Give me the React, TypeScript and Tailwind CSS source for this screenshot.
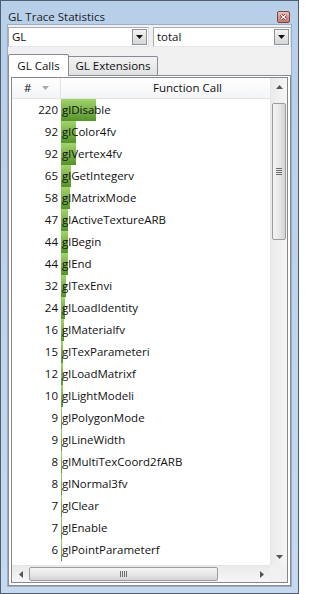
import React from 'react';

const calls: [number, string][] = [
  [220, 'glDisable'],
  [92, 'glColor4fv'],
  [92, 'glVertex4fv'],
  [65, 'glGetIntegerv'],
  [58, 'glMatrixMode'],
  [47, 'glActiveTextureARB'],
  [44, 'glBegin'],
  [44, 'glEnd'],
  [32, 'glTexEnvi'],
  [24, 'glLoadIdentity'],
  [16, 'glMaterialfv'],
  [15, 'glTexParameteri'],
  [12, 'glLoadMatrixf'],
  [10, 'glLightModeli'],
  [9, 'glPolygonMode'],
  [9, 'glLineWidth'],
  [8, 'glMultiTexCoord2fARB'],
  [8, 'glNormal3fv'],
  [7, 'glClear'],
  [7, 'glEnable'],
  [6, 'glPointParameterf'],
];

const Arrow = ({ dir, color = '#404040' }: { dir: 'up' | 'down' | 'left' | 'right'; color?: string }) => {
  const pts = {
    up: '0,4 3.5,0 7,4',
    down: '0,0 7,0 3.5,4',
    left: '4,0 4,7 0,3.5',
    right: '0,0 0,7 4,3.5',
  }[dir];
  const vertical = dir === 'up' || dir === 'down';
  return (
    <svg width={vertical ? 7 : 4} height={vertical ? 4 : 7} viewBox={vertical ? '0 0 7 4' : '0 0 4 7'}>
      <polygon points={pts} fill={color} />
    </svg>
  );
};

const Combo = ({ value, className }: { value: string; className: string }) => (
  <div className={`${className} h-[20px] flex items-center bg-white border border-[#abadb3] border-r-[#dbdfe6] border-b-[#e3e9ef]`}>
    <span className="flex-1 pl-[3px] leading-none">{value}</span>
    <div className="w-[15px] h-[16px] mr-[1px] flex items-center justify-center border border-[#8f9296] bg-gradient-to-b from-[#f4f4f4] to-[#d6d6d6]">
      <Arrow dir="down" color="#111" />
    </div>
  </div>
);

export default function App() {
  return (
    <div className="w-[299px] h-[594px] flex flex-col bg-gradient-to-b from-[#b8cfe9] to-[#c6d9ee] border border-[#4e5e70] font-['Open_Sans',sans-serif] text-[11.5px] text-[#111] overflow-hidden">
      {/* title bar */}
      <div className="h-[23px] shrink-0 flex justify-between pl-[7px] pr-[8px]">
        <span className="self-end mb-[-1px] text-[11.5px] leading-[16px] text-[#1c1c1c]">GL Trace Statistics</span>
        <div className="self-end mb-[1px] w-[13px] h-[12px] rounded-[2px] border border-[#7b4741] bg-gradient-to-b from-[#edc0b9] to-[#c9766d] flex items-center justify-center">
          <svg width="7" height="6" viewBox="0 0 7 6">
            <path d="M1 0.8 L6 5.2 M6 0.8 L1 5.2" stroke="#4a2520" strokeWidth="2.6" />
            <path d="M1 0.8 L6 5.2 M6 0.8 L1 5.2" stroke="#fff" strokeWidth="1.4" />
          </svg>
        </div>
      </div>

      {/* client area */}
      <div className="flex-1 mx-[6px] mb-[6px] flex flex-col bg-[#f0f0f0] border border-[#99adc5] min-h-0">
        <div className="mt-[2px] flex gap-[4px]">
          <Combo value="GL" className="w-[141px]" />
          <Combo value="total" className="flex-1" />
        </div>

        {/* tabs */}
        <div className="mt-[7px] h-[21px] flex items-end">
          <div className="relative z-10 h-[22px] mb-[-1px] w-[61px] flex items-center justify-center bg-white border border-b-0 border-[#898c95] rounded-t-[2px]">
            GL Calls
          </div>
          <div className="h-[19px] w-[89px] flex items-center justify-center bg-gradient-to-b from-[#f3f3f3] to-[#e1e1e1] border border-l-0 border-b-0 border-[#898c95] rounded-tr-[2px]">
            GL Extensions
          </div>
        </div>

        {/* tab pane */}
        <div className="flex-1 min-h-0 flex flex-col bg-white border border-[#898c95] pt-[1px] px-[2px] pb-[2px]">
          <div className="flex-1 min-h-0 flex flex-col border border-[#828790]">
            <div className="flex-1 min-h-0 flex">
              {/* list */}
              <div className="flex-1 min-w-0 flex flex-col overflow-hidden">
                <div className="h-[21px] shrink-0 flex bg-gradient-to-b from-white to-[#f3f4f6] border-b border-[#e3e4e6]">
                  <div className="w-[49px] flex items-center pl-[12px] gap-[11px] border-r border-[#e1e2e4]">
                    <span>#</span>
                    <svg width="7" height="4" viewBox="0 0 7 4">
                      <polygon points="0,0 7,0 3.5,4" fill="#a7abb0" />
                    </svg>
                  </div>
                  <div className="flex-1 flex items-center pl-[92px] whitespace-nowrap">Function Call</div>
                </div>
                <div className="flex-1 overflow-hidden">
                  {calls.map(([n, name], i) => (
                    <div key={i} className="h-[22px] flex items-stretch whitespace-nowrap">
                      <div className="w-[49px] flex items-center justify-end pr-[3px]">{n}</div>
                      <div className="relative flex items-center pl-[1px]">
                        <div
                          className="absolute left-0 top-0 bottom-0 bg-gradient-to-b from-[#a3d46b] to-[#54932a]"
                          style={{ width: Math.max(1, Math.round((n * 35) / 220)) }}
                        />
                        <span className="relative">{name}</span>
                      </div>
                    </div>
                  ))}
                </div>
              </div>

              {/* vertical scrollbar */}
              <div className="w-[17px] shrink-0 flex flex-col bg-gradient-to-r from-[#eaeaea] to-[#f6f6f6] border-l border-[#e6e6e6]">
                <div className="h-[17px] flex items-center justify-center">
                  <Arrow dir="up" color="#555" />
                </div>
                <div className="flex-1 flex flex-col pt-[8px]">
                  <div className="mx-[1px] h-[137px] rounded-[2px] border border-[#9c9c9c] bg-gradient-to-r from-[#f4f4f4] via-[#e8e8e8] to-[#d4d4d4] flex flex-col items-center justify-center gap-[1px]">
                    <div className="w-[6px] h-[1px] bg-[#6d6d6d]" />
                    <div className="w-[6px] h-[1px] bg-[#6d6d6d]" />
                    <div className="w-[6px] h-[1px] bg-[#6d6d6d]" />
                    <div className="w-[6px] h-[1px] bg-[#6d6d6d]" />
                  </div>
                </div>
                <div className="h-[17px] flex items-center justify-center">
                  <Arrow dir="down" color="#555" />
                </div>
              </div>
            </div>

            {/* horizontal scrollbar */}
            <div className="h-[17px] shrink-0 flex">
              <div className="flex-1 flex bg-gradient-to-b from-[#eaeaea] to-[#f6f6f6] border-t border-[#e6e6e6]">
                <div className="w-[17px] flex items-center justify-center">
                  <Arrow dir="left" color="#555" />
                </div>
                <div className="flex-1 flex items-stretch py-[1px]">
                  <div className="w-[189px] rounded-[2px] border border-[#9c9c9c] bg-gradient-to-b from-[#f4f4f4] via-[#e8e8e8] to-[#d4d4d4] flex items-center justify-center gap-[1px]">
                    <div className="w-[1px] h-[6px] bg-[#6d6d6d]" />
                    <div className="w-[1px] h-[6px] bg-[#6d6d6d]" />
                    <div className="w-[1px] h-[6px] bg-[#6d6d6d]" />
                    <div className="w-[1px] h-[6px] bg-[#6d6d6d]" />
                  </div>
                </div>
                <div className="w-[17px] flex items-center justify-center">
                  <Arrow dir="right" color="#555" />
                </div>
              </div>
              <div className="w-[17px] bg-[#f0f0f0]" />
            </div>
          </div>
        </div>
      </div>
    </div>
  );
}
